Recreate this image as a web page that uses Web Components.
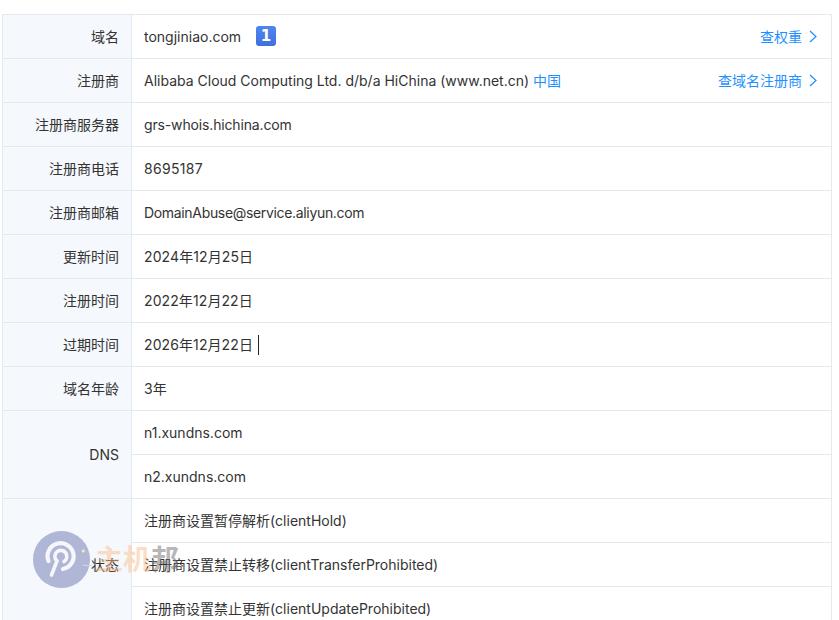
<!DOCTYPE html>
<html lang="zh">
<head>
<meta charset="utf-8">
<title>whois</title>
<style>
html, body { margin: 0; height: 100%; overflow: hidden; background: #fff; }
body {
	padding: 14px 7px 0 2px;
	font: 14px/20px Inter, "Noto Sans CJK SC", sans-serif;
	color: #333;
}
</style>
</head>
<body>
<whois-table>
	<whois-row label="域名">tongjiniao.com <rank-badge>1</rank-badge><more-link slot="action">查权重</more-link></whois-row>
	<whois-row label="注册商">Alibaba Cloud Computing Ltd. d/b/a HiChina (www.net.cn) <a-cn>中国</a-cn><more-link slot="action">查域名注册商</more-link></whois-row>
	<whois-row label="注册商服务器"><span style="letter-spacing:-.15px">grs-whois.hichina.com</span></whois-row>
	<whois-row label="注册商电话"><span style="letter-spacing:.3px">8695187</span></whois-row>
	<whois-row label="注册商邮箱"><span style="letter-spacing:-.33px">DomainAbuse@service.aliyun.com</span></whois-row>
	<whois-row label="更新时间"><span style="letter-spacing:.1px">2024年12月25日</span></whois-row>
	<whois-row label="注册时间"><span style="letter-spacing:.1px">2022年12月22日</span></whois-row>
	<whois-row label="过期时间"><span style="letter-spacing:.1px">2026年12月22日</span><text-caret></text-caret></whois-row>
	<whois-row label="域名年龄">3年</whois-row>
	<whois-row label="DNS">
		<whois-line>n1.xundns.com</whois-line>
		<whois-line>n2.xundns.com</whois-line>
	</whois-row>
	<whois-row label="状态">
		<whois-line>注册商设置暂停解析(clientHold)</whois-line>
		<whois-line>注册商设置禁止转移(clientTransferProhibited)</whois-line>
		<whois-line>注册商设置禁止更新(clientUpdateProhibited)</whois-line>
	</whois-row>
</whois-table>
<site-watermark></site-watermark>

<script>
class WhoisTable extends HTMLElement {
	constructor() {
		super();
		this.attachShadow({ mode: 'open' });
		this.shadowRoot.innerHTML = `
		<style>
		:host {
			display: block;
			border: 1px solid #e6e8ef;
			border-bottom: 0;
		}
		</style>
		<slot></slot>`;
	}
}

class WhoisRow extends HTMLElement {
	constructor() {
		super();
		this.attachShadow({ mode: 'open' });
		this.shadowRoot.innerHTML = `
		<style>
		:host {
			display: grid;
			grid-template-columns: 129px 1fr;
			border-bottom: 1px solid #e6e8ef;
		}
		.label {
			display: flex;
			align-items: center;
			justify-content: flex-end;
			padding-right: 12px;
			background: #f5f8fc;
			border-right: 1px solid #e6e8ef;
		}
		.value {
			display: flex;
			flex-direction: column;
			justify-content: center;
			min-height: 43px;
		}
		.line {
			display: flex;
			align-items: center;
			justify-content: space-between;
			min-height: 43px;
			padding: 0 14px 0 12px;
		}
		.action { display: flex; }
		</style>
		<div class="label"></div>
		<div class="value">
			<div class="line"><span class="main"><slot></slot></span><span class="action"><slot name="action"></slot></span></div>
		</div>`;
		this.shadowRoot.querySelector('.label').textContent = this.getAttribute('label');
	}

	connectedCallback() {
		// rows holding whois-line children lose the inner padding
		if (this.querySelector('whois-line')) {
			const line = this.shadowRoot.querySelector('.line');
			line.style.padding = '0';
			line.style.display = 'block';
		}
	}
}

class WhoisLine extends HTMLElement {
	constructor() {
		super();
		this.attachShadow({ mode: 'open' });
		this.shadowRoot.innerHTML = `
		<style>
		:host {
			display: flex;
			align-items: center;
			height: 43px;
			padding-left: 12px;
			border-bottom: 1px solid #e6e8ef;
		}
		:host(:last-of-type) { border-bottom: 0; }
		</style>
		<slot></slot>`;
	}
}

class RankBadge extends HTMLElement {
	constructor() {
		super();
		this.attachShadow({ mode: 'open' });
		this.shadowRoot.innerHTML = `
		<style>
		:host {
			display: inline-flex;
			align-items: center;
			justify-content: center;
			width: 20px;
			height: 20px;
			margin-left: 11px;
			border-radius: 3px;
			background: linear-gradient(#4f86f0, #3f6fe0);
			color: #fff;
			font: bold 15px "DejaVu Sans", sans-serif;
			vertical-align: 1px;
		}
		</style>
		<slot></slot>`;
	}
}

class MoreLink extends HTMLElement {
	constructor() {
		super();
		this.attachShadow({ mode: 'open' });
		this.shadowRoot.innerHTML = `
		<style>
		:host {
			display: inline-flex;
			align-items: center;
			gap: 7px;
			color: #1e90ff;
		}
		svg { width: 8px; height: 13px; }
		</style>
		<slot></slot>
		<svg viewBox="0 0 8 13" fill="none" stroke="#1e90ff" stroke-width="1.2"><path d="M1 1l6 5.5-6 5.5"/></svg>`;
	}
}

class ACn extends HTMLElement {
	constructor() {
		super();
		this.attachShadow({ mode: 'open' });
		this.shadowRoot.innerHTML = `
		<style>
		:host { color: #1e90ff; }
		</style>
		<slot></slot>`;
	}
}

class TextCaret extends HTMLElement {
	constructor() {
		super();
		this.attachShadow({ mode: 'open' });
		this.shadowRoot.innerHTML = `
		<style>
		:host {
			display: inline-block;
			width: 1px;
			height: 20px;
			margin-left: 5px;
			background: #222;
			vertical-align: -5px;
		}
		</style>`;
	}
}

class SiteWatermark extends HTMLElement {
	constructor() {
		super();
		this.attachShadow({ mode: 'open' });
		this.shadowRoot.innerHTML = `
		<style>
		:host {
			position: absolute;
			left: 33px;
			top: 531px;
			display: flex;
			align-items: flex-start;
			gap: 2px;
			pointer-events: none;
		}
		svg { width: 60px; height: 57px; }
		.name {
			font: bold 28px/32px "Liberation Serif", "Noto Sans CJK SC", serif;
			margin-top: 14px;
		}
		.a { color: rgba(250, 190, 140, .5); }
		.b { color: rgba(120, 120, 120, .55); }
		</style>
		<svg viewBox="0 0 60 57">
			<circle cx="28.5" cy="28.5" r="28.5" fill="#8e97c4" fill-opacity=".68"/>
			<path d="M15.5 30A13 13 0 1 1 30 38" fill="none" stroke="#f5f7fb" stroke-width="4.2" stroke-linecap="round"/>
			<path d="M18.5 44L24 30A6 6 0 1 1 31 30.5" fill="none" stroke="#f5f7fb" stroke-width="3.6" stroke-linecap="round"/>
			<path d="M50.3 17.5l.7 1.8 1.8.7-1.8.7-.7 1.8-.7-1.8-1.8-.7 1.8-.7z" fill="#f6efc8"/>
			<path d="M50 34q4 1 9 .5" fill="none" stroke="#d9dbe8" stroke-width="1"/>
		</svg>
		<div class="name"><span class="a">主机</span><span class="b">邦</span></div>`;
	}
}

customElements.define('whois-table', WhoisTable);
customElements.define('whois-row', WhoisRow);
customElements.define('whois-line', WhoisLine);
customElements.define('rank-badge', RankBadge);
customElements.define('more-link', MoreLink);
customElements.define('a-cn', ACn);
customElements.define('text-caret', TextCaret);
customElements.define('site-watermark', SiteWatermark);
</script>
</body>
</html>
